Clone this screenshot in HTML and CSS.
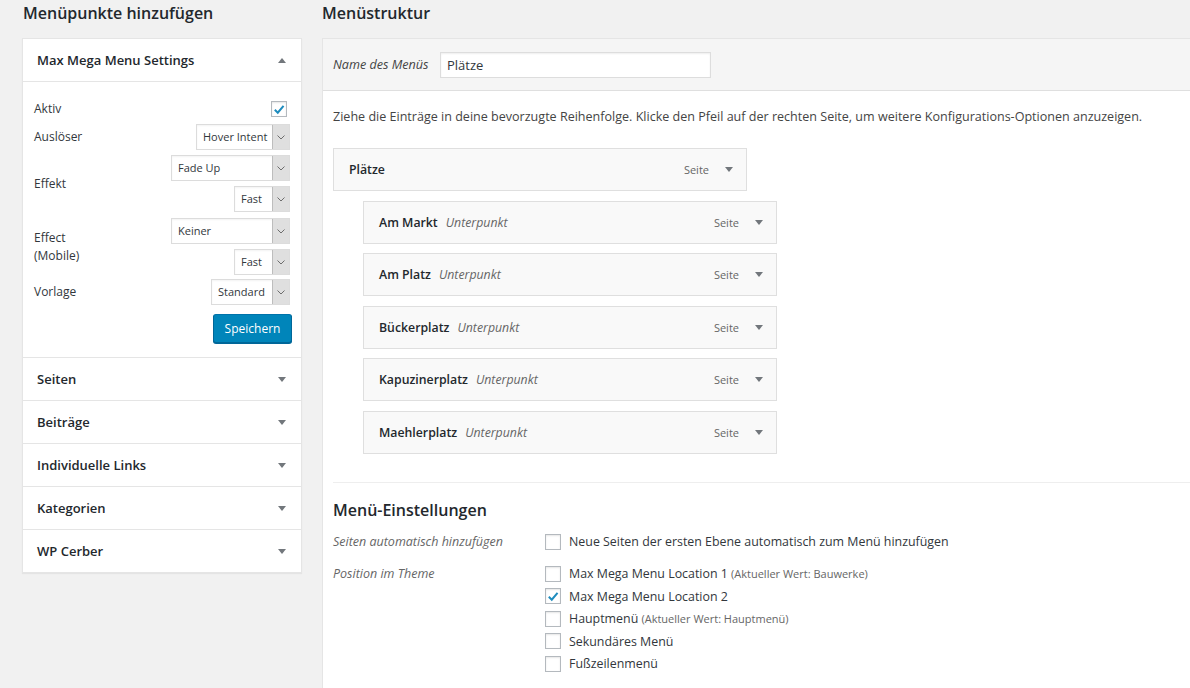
FILE: index.html
```html
<!DOCTYPE html>
<html lang="de">
<head>
<meta charset="utf-8">
<title>Menüs</title>
<link rel="stylesheet" href="styles.css">
</head>
<body>
<div class="page">
  <div class="col-left">
    <h2 class="col-title col-title-left">Menüpunkte hinzufügen</h2>
    <div class="accordion">
      <div class="acc-section open">
        <div class="acc-head"><span>Max Mega Menu Settings</span><span class="tri tri-up"></span></div>
        <div class="acc-body">
          <div class="set-row row-aktiv">
            <span class="set-label">Aktiv</span>
            <span class="cb cb-aktiv"><svg viewBox="0 0 16 16"><path d="M3.2 8.2 L6.6 11.6 L13.2 3.8"/></svg></span>
          </div>
          <div class="set-row gap-7">
            <span class="set-label">Auslöser</span>
            <div class="controls">
              <div class="select sel-trigger"><span class="select-value">Hover Intent</span><span class="select-btn"><svg viewBox="0 0 8 5"><polyline points="0.5,0.5 4,4 7.5,0.5"/></svg></span></div>
            </div>
          </div>
          <div class="set-row gap-5">
            <span class="set-label">Effekt</span>
            <div class="controls">
              <div class="select sel-effect"><span class="select-value">Fade Up</span><span class="select-btn"><svg viewBox="0 0 8 5"><polyline points="0.5,0.5 4,4 7.5,0.5"/></svg></span></div>
              <div class="select sel-speed"><span class="select-value">Fast</span><span class="select-btn"><svg viewBox="0 0 8 5"><polyline points="0.5,0.5 4,4 7.5,0.5"/></svg></span></div>
            </div>
          </div>
          <div class="set-row gap-6">
            <span class="set-label">Effect<br>(Mobile)</span>
            <div class="controls">
              <div class="select sel-effect"><span class="select-value">Keiner</span><span class="select-btn"><svg viewBox="0 0 8 5"><polyline points="0.5,0.5 4,4 7.5,0.5"/></svg></span></div>
              <div class="select sel-speed"><span class="select-value">Fast</span><span class="select-btn"><svg viewBox="0 0 8 5"><polyline points="0.5,0.5 4,4 7.5,0.5"/></svg></span></div>
            </div>
          </div>
          <div class="set-row gap-4">
            <span class="set-label">Vorlage</span>
            <div class="controls">
              <div class="select sel-theme"><span class="select-value">Standard</span><span class="select-btn"><svg viewBox="0 0 8 5"><polyline points="0.5,0.5 4,4 7.5,0.5"/></svg></span></div>
            </div>
          </div>
          <div class="btn-row">
            <button class="btn-primary">Speichern</button>
          </div>
        </div>
      </div>
      <div class="acc-section"><div class="acc-head"><span>Seiten</span><span class="tri"></span></div></div>
      <div class="acc-section"><div class="acc-head"><span>Beiträge</span><span class="tri"></span></div></div>
      <div class="acc-section"><div class="acc-head"><span>Individuelle Links</span><span class="tri"></span></div></div>
      <div class="acc-section"><div class="acc-head"><span>Kategorien</span><span class="tri"></span></div></div>
      <div class="acc-section"><div class="acc-head"><span>WP Cerber</span><span class="tri"></span></div></div>
    </div>
  </div>

  <div class="col-right">
    <h2 class="col-title">Menüstruktur</h2>
    <div class="menu-panel">
      <div class="menu-header">
        <span class="name-label">Name des Menüs</span>
        <div class="text-input">Plätze</div>
      </div>
      <div class="menu-body">
        <p class="desc">Ziehe die Einträge in deine bevorzugte Reihenfolge. Klicke den Pfeil auf der rechten Seite, um weitere Konfigurations-Optionen anzuzeigen.</p>
        <ul class="menu-items">
          <li class="item"><span class="item-title">Plätze</span><span class="item-type">Seite</span><span class="tri"></span></li>
          <li class="item depth-1"><span class="item-title">Am Markt</span><span class="item-sub">Unterpunkt</span><span class="item-type">Seite</span><span class="tri"></span></li>
          <li class="item depth-1"><span class="item-title">Am Platz</span><span class="item-sub">Unterpunkt</span><span class="item-type">Seite</span><span class="tri"></span></li>
          <li class="item depth-1"><span class="item-title">Bückerplatz</span><span class="item-sub">Unterpunkt</span><span class="item-type">Seite</span><span class="tri"></span></li>
          <li class="item depth-1"><span class="item-title">Kapuzinerplatz</span><span class="item-sub">Unterpunkt</span><span class="item-type">Seite</span><span class="tri"></span></li>
          <li class="item depth-1"><span class="item-title">Maehlerplatz</span><span class="item-sub">Unterpunkt</span><span class="item-type">Seite</span><span class="tri"></span></li>
        </ul>
        <div class="menu-settings">
          <h3 class="settings-title">Menü-Einstellungen</h3>
          <div class="settings-row">
            <span class="settings-label">Seiten automatisch hinzufügen</span>
            <div class="settings-opts">
              <label class="opt"><span class="cb"></span>Neue Seiten der ersten Ebene automatisch zum Menü hinzufügen</label>
            </div>
          </div>
          <div class="settings-row row-locations">
            <span class="settings-label">Position im Theme</span>
            <div class="settings-opts list">
              <label class="opt"><span class="cb"></span>Max Mega Menu Location 1 <span class="opt-note">(Aktueller Wert: Bauwerke)</span></label>
              <label class="opt"><span class="cb"><svg viewBox="0 0 16 16"><path d="M3.2 8.2 L6.6 11.6 L13.2 3.8"/></svg></span>Max Mega Menu Location 2</label>
              <label class="opt"><span class="cb"></span>Hauptmenü <span class="opt-note">(Aktueller Wert: Hauptmenü)</span></label>
              <label class="opt"><span class="cb"></span>Sekundäres Menü</label>
              <label class="opt"><span class="cb"></span>Fußzeilenmenü</label>
            </div>
          </div>
        </div>
      </div>
    </div>
  </div>
</div>
</body>
</html>
```

FILE: styles.css
```css
* { box-sizing: border-box; }
html, body { margin: 0; padding: 0; }
body {
  background: #f1f1f1;
  font-family: "Open Sans", "Noto Sans", sans-serif;
  color: #23282d;
  font-size: 12px;
  overflow: hidden;
  height: 688px;
}
.page {
  display: flex;
  gap: 20px;
  padding-left: 22px;
  height: 688px;
}
.col-left { width: 280px; flex: none; }
.col-right { flex: 1; margin-right: -4px; display: flex; flex-direction: column; }

.col-title {
  margin: 0;
  height: 38px;
  padding-top: 1px;
  font-size: 16px;
  line-height: 24px;
  font-weight: 600;
  color: #23282d;
}
.col-title-left { padding-left: 1px; }

/* accordion */
.accordion {
  background: #fff;
  border: 1px solid #e5e5e5;
  box-shadow: 0 1px 1px rgba(0,0,0,.05);
}
.acc-section + .acc-section { border-top: 1px solid #e5e5e5; }
.acc-head {
  height: 42px;
  display: flex;
  align-items: center;
  justify-content: space-between;
  padding: 0 15px 0 14px;
  font-size: 13px;
  font-weight: 600;
  color: #23282d;
}
.open .acc-head { height: 43px; border-bottom: 1px solid #e5e5e5; }
.tri {
  width: 0; height: 0;
  border-left: 4px solid transparent;
  border-right: 4px solid transparent;
  border-top: 5px solid #72777c;
}
.tri-up { border-top: none; border-bottom: 5px solid #72777c; }

.acc-body { padding: 19px 11px 14px 11px; height: 275px; }
.set-row {
  display: flex;
  justify-content: space-between;
  align-items: center;
}
.row-aktiv { height: 16px; }
.gap-7 { margin-top: 7px; }
.gap-6 { margin-top: 6px; }
.gap-5 { margin-top: 5px; }
.gap-4 { margin-top: 4px; }
.set-label { font-size: 12px; line-height: 18px; color: #32373c; }
.controls { display: flex; flex-direction: column; align-items: flex-end; gap: 5px; }

.cb {
  width: 16px; height: 16px;
  border: 1px solid #b4b9be;
  background: #fff;
  box-shadow: inset 0 1px 2px rgba(0,0,0,.1);
  display: inline-flex;
  align-items: center;
  justify-content: center;
  flex: none;
}
.cb svg { width: 15px; height: 15px; }
.cb path { fill: none; stroke: #1e8cbe; stroke-width: 2.3; }
.cb-aktiv { margin-right: 3px; }

.select {
  height: 26px;
  display: flex;
  align-items: stretch;
  border: 1px solid #dcdcdc;
  background: #fff;
  box-shadow: inset 0 1px 2px rgba(0,0,0,.05);
}
.sel-trigger { width: 94px; }
.sel-effect { width: 119px; }
.sel-speed { width: 56px; }
.sel-theme { width: 79px; }
.select-value {
  flex: 1;
  padding-left: 6px;
  font-size: 11px;
  line-height: 24px;
  color: #32373c;
  white-space: nowrap;
  overflow: hidden;
}
.select-btn {
  width: 17px;
  flex: none;
  background: #dfdfdf;
  border-left: 1px solid #bdbdbd;
  display: flex;
  align-items: center;
  justify-content: center;
}
.select-btn svg { width: 8px; height: 5px; }
.select-btn polyline { fill: none; stroke: #6d6d6d; stroke-width: 1; }

.btn-row { display: flex; justify-content: flex-end; margin-top: 9px; margin-right: -2px; }
.btn-primary {
  width: 79px;
  height: 29px;
  background: #0085ba;
  border: 1px solid #0073aa;
  border-color: #0073aa #006799 #006799;
  box-shadow: 0 1px 0 #006799;
  border-radius: 3px;
  color: #fff;
  font-family: inherit;
  font-size: 12px;
  padding: 0;
}

/* menu panel */
.menu-panel {
  flex: 1;
  background: #fff;
  border: 1px solid #e5e5e5;
  border-bottom: none;
}
.menu-header {
  height: 52px;
  background: #f5f5f5;
  border-bottom: 1px solid #dfdfdf;
  display: flex;
  align-items: center;
  padding: 0 10px;
}
.name-label {
  width: 107px;
  font-style: italic;
  font-size: 12.6px;
  color: #444;
}
.text-input {
  width: 271px;
  height: 26px;
  background: #fff;
  border: 1px solid #ddd;
  box-shadow: inset 0 1px 2px rgba(0,0,0,.07);
  padding: 0 6px;
  font-size: 13px;
  line-height: 24px;
  color: #32373c;
}
.menu-body { padding: 17px 0 0 10px; }
.desc {
  margin: 0;
  font-size: 12.55px;
  line-height: 18px;
  color: #444;
  white-space: nowrap;
}
.menu-items { list-style: none; margin: 22px 0 0 0; padding: 0; }
.item {
  width: 414px;
  height: 43px;
  border: 1px solid #dfdfdf;
  background: #f9f9f9;
  display: flex;
  align-items: center;
  padding: 0 13px 0 15px;
}
.item + .item { margin-top: 9.5px; }
.depth-1 { margin-left: 30px; }
.item-title { font-size: 12.3px; font-weight: 600; color: #23282d; }
.item-sub { margin-left: 8px; font-size: 12.3px; font-style: italic; color: #666; }
.item-type { margin-left: auto; margin-right: 16px; font-size: 11px; color: #666; }

.menu-settings {
  margin-top: 28px;
  border-top: 1px solid #eee;
}
.settings-title {
  margin: 15px 0 0 0;
  font-size: 16px;
  line-height: 24px;
  font-weight: 600;
  color: #23282d;
}
.settings-row { display: flex; margin-top: 12px; }
.row-locations { margin-top: 16px; }
.settings-label {
  width: 212px;
  flex: none;
  font-style: italic;
  font-size: 12.5px;
  color: #666;
  line-height: 16px;
}
.settings-opts.list { display: flex; flex-direction: column; gap: 6.5px; }
.opt {
  display: flex;
  align-items: center;
  height: 16px;
  font-size: 12.4px;
  color: #32373c;
  white-space: pre;
}
.opt .cb { margin-right: 8px; }
.opt-note { font-size: 11px; color: #666; }
```
